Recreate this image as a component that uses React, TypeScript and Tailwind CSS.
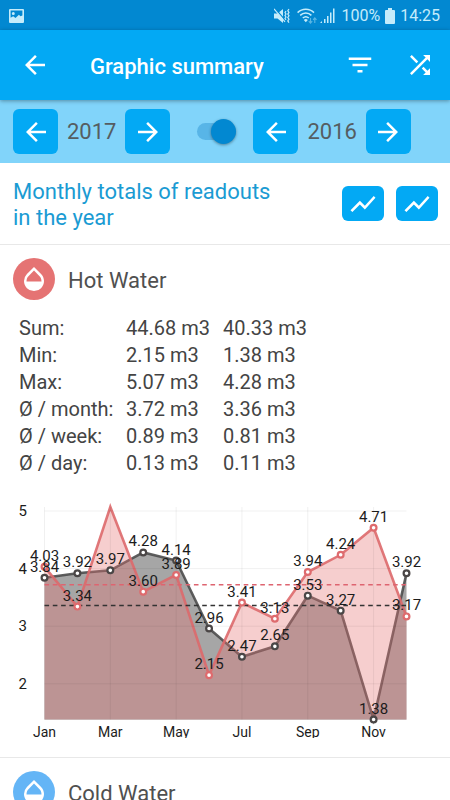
import { useState, type ReactNode } from "react";
import {
  MdArrowBack,
  MdArrowForward,
  MdFilterList,
  MdOpacity,
  MdShowChart,
  MdShuffle,
} from "react-icons/md";

const MONTHS = ["Jan", "Feb", "Mar", "Apr", "May", "Jun", "Jul", "Aug", "Sep", "Oct", "Nov", "Dec"];
const CURRENT = [4.03, 3.34, 5.07, 3.6, 3.89, 2.15, 3.41, 3.13, 3.94, 4.24, 4.71, 3.17];
const PREVIOUS = [3.84, 3.92, 3.97, 4.28, 4.14, 2.96, 2.47, 2.65, 3.53, 3.27, 1.38, 3.92];

const STATS = [
  ["Sum:", "44.68 m3", "40.33 m3"],
  ["Min:", "2.15 m3", "1.38 m3"],
  ["Max:", "5.07 m3", "4.28 m3"],
  ["Ø / month:", "3.72 m3", "3.36 m3"],
  ["Ø / week:", "0.89 m3", "0.81 m3"],
  ["Ø / day:", "0.13 m3", "0.11 m3"],
];

// Chart geometry, in view box units
const LEFT = 44.5;
const RIGHT = 406.5;
const TOP = 12;
const BOTTOM = 224.5;
const xAt = (i: number) => LEFT + (i * (RIGHT - LEFT)) / 11;
const yAt = (v: number) => 16 + (5 - v) * 57.6;
const line = (data: number[]) => data.map((v, i) => `${xAt(i)},${yAt(v)}`).join(" ");
const area = (data: number[]) => `${LEFT},${BOTTOM} ${line(data)} ${RIGHT},${BOTTOM}`;

function Series({ data, fill, stroke, opacity }: { data: number[]; fill: string; stroke: string; opacity: number }) {
  return (
    <g>
      <polygon points={area(data)} fill={fill} fillOpacity={opacity} />
      <polyline points={line(data)} fill="none" stroke={stroke} strokeWidth="2.6" strokeOpacity="0.9" />
    </g>
  );
}

function Dots({ data, color }: { data: number[]; color: string }) {
  return (
    <g fill="#fff" stroke={color} strokeWidth="2.2">
      {data.map((v, i) => (v > 5 ? null : <circle key={i} cx={xAt(i)} cy={yAt(v)} r="2.9" />))}
    </g>
  );
}

function Labels({ data }: { data: number[] }) {
  return (
    <g fill="#1c1c1c" fontSize="15" textAnchor="middle">
      {data.map((v, i) =>
        v > 5 ? null : (
          <text key={i} x={xAt(i)} y={yAt(v) - 6}>
            {v.toFixed(2)}
          </text>
        ),
      )}
    </g>
  );
}

function Chart() {
  return (
    <svg viewBox="0 0 450 243" className="mt-[18px] block w-full" role="img" aria-label="Hot Water monthly totals">
      <Series data={PREVIOUS} fill="#424242" stroke="#4c4c4c" opacity={0.47} />
      <Series data={CURRENT} fill="#e57373" stroke="#dd696c" opacity={0.35} />
      <g stroke="#000" strokeOpacity="0.06">
        {[5, 4, 3, 2].map((v) => (
          <line key={v} x1={LEFT} x2={RIGHT} y1={yAt(v)} y2={yAt(v)} />
        ))}
        {[0, 2, 4, 6, 8, 10].map((i) => (
          <line key={i} x1={xAt(i)} x2={xAt(i)} y1={TOP} y2={BOTTOM} />
        ))}
        <line x1={LEFT} x2={RIGHT} y1={BOTTOM} y2={BOTTOM} />
      </g>
      <g strokeWidth="1.6" strokeDasharray="4.6 3.7">
        <line x1={LEFT} x2={RIGHT} y1={yAt(3.72)} y2={yAt(3.72)} stroke="#de6470" />
        <line x1={LEFT} x2={RIGHT} y1={yAt(3.36)} y2={yAt(3.36)} stroke="#333" />
      </g>
      <Dots data={PREVIOUS} color="#4a4646" />
      <Dots data={CURRENT} color="#de6b6e" />
      <Labels data={PREVIOUS} />
      <Labels data={CURRENT} />
      <g fill="#1c1c1c" fontSize="15">
        {[5, 4, 3, 2].map((v) => (
          <text key={v} x="27" y={yAt(v) + 5} textAnchor="end">
            {v}
          </text>
        ))}
      </g>
      <g fill="#1c1c1c" fontSize="14" textAnchor="middle">
        {MONTHS.map((m, i) =>
          i % 2 ? null : (
            <text key={m} x={xAt(i)} y="242">
              {m}
            </text>
          ),
        )}
      </g>
    </svg>
  );
}

function StatusBar() {
  return (
    <div className="flex h-[30px] shrink-0 items-center bg-[#0288d1] pl-[9px] pr-[10px] pt-px text-[#c5ecfb]">
      <svg width="15" height="14" viewBox="0 0 15 14" fill="currentColor" aria-hidden="true">
        <path
          fillRule="evenodd"
          d="M1 0h13a1 1 0 011 1v12a1 1 0 01-1 1H1a1 1 0 01-1-1V1a1 1 0 011-1zm.6 1.600v7.200l2.600-1.600 2.300 1.700 3.400-3.100 1.600 1.400 1.900-.7V1.600zM4.300 3a1.500 1.500 0 110 3 1.500 1.500 0 010-3z"
        />
      </svg>
      <div className="ml-auto flex items-center">
        <svg width="16" height="16" viewBox="0 0 16 16" aria-hidden="true">
          <path d="M0 5.500h3.500L9 1v14l-5.500-4.500H0z" fill="currentColor" />
          <path d="M.8 0l11 13" stroke="#0288d1" strokeWidth="1.200" />
          <path d="M0 .8l11 13" stroke="currentColor" strokeWidth="1.200" />
          <path
            d="M12 3l-1 1.500 1 1.500-1 1.500 1 1.500-1 1.500 1 1.500M15 1l-1.200 1.700L15 4.400l-1.200 1.700L15 7.800l-1.200 1.700 1.200 1.700-1.200 1.700 1.200 1.700"
            fill="none"
            stroke="currentColor"
            strokeWidth="1.200"
          />
        </svg>
        <svg className="ml-[7px]" width="20" height="16" viewBox="0 0 20 16" aria-hidden="true">
          <g fill="none" stroke="currentColor" strokeWidth="1.500">
            <path d="M.6 4.600a11.500 11.500 0 0116.400 0" />
            <path d="M3.200 7.400a8 8 0 0111.200 0" />
            <path d="M5.800 10a4.500 4.500 0 016 0" />
          </g>
          <path d="M8.800 14.200L6.800 11.900a3 3 0 014 0z" fill="currentColor" />
          <path
            d="M13.500 10v5m-1.700-1.900l1.700 2 1.700-2M17.800 15v-5m-1.700 1.900l1.700-2 1.700 2"
            fill="none"
            stroke="#5bb6e3"
            strokeWidth="1.100"
          />
        </svg>
        <svg className="ml-[3px]" width="15" height="16" viewBox="0 0 15 16" fill="currentColor" aria-hidden="true">
          <path d="M0 15l2-2v2zM4 11h1.500v4H4zM7 8h1.500v7H7zM10 4.500h1.500V15H10zM13 .5h1.500V15H13z" />
        </svg>
        <span className="ml-[6px] text-base">100%</span>
        <svg className="ml-[5px]" width="10" height="16" viewBox="0 0 10 16" fill="currentColor" aria-hidden="true">
          <path d="M3 0h4v2h2a1 1 0 011 1v12a1 1 0 01-1 1H1a1 1 0 01-1-1V3a1 1 0 011-1h2z" />
        </svg>
        <span className="ml-[5px] text-base">14:25</span>
      </div>
    </div>
  );
}

type IconButtonProps = { label: string; className: string; onClick?: () => void; children: ReactNode };

function IconButton({ label, className, onClick, children }: IconButtonProps) {
  return (
    <button
      type="button"
      aria-label={label}
      onClick={onClick}
      className={`flex shrink-0 items-center justify-center text-[30px] text-white ${className}`}
    >
      {children}
    </button>
  );
}

function YearPicker({ initial }: { initial: number }) {
  const [year, setYear] = useState(initial);
  return (
    <div className="flex items-center gap-[9px]">
      <IconButton
        label="Previous year"
        className="size-[45px] rounded-md bg-[#03a9f4]"
        onClick={() => setYear(year - 1)}
      >
        <MdArrowBack />
      </IconButton>
      <span className="text-[22px] text-[#555d61]">{year}</span>
      <IconButton label="Next year" className="size-[45px] rounded-md bg-[#03a9f4]" onClick={() => setYear(year + 1)}>
        <MdArrowForward />
      </IconButton>
    </div>
  );
}

function MeterHeading({ name, color }: { name: string; color: string }) {
  return (
    <div className="flex items-center gap-[13px] px-[13px] pt-[13px]">
      <span className={`flex size-[42px] items-center justify-center rounded-full text-[30px] text-white ${color}`}>
        <MdOpacity />
      </span>
      <h3 className="pt-0.5 text-[22px] text-[#505050]">{name}</h3>
    </div>
  );
}

export default function App() {
  return (
    <div className="flex h-screen flex-col overflow-hidden bg-white font-[Roboto,sans-serif]">
      <StatusBar />
      <header className="z-10 flex h-[70px] shrink-0 items-center bg-[#03a9f4] px-[15px] shadow-[0_1px_4px_rgba(0,0,0,0.35)]">
        <IconButton label="Back" className="size-10">
          <MdArrowBack />
        </IconButton>
        <h1 className="ml-[35px] flex-1 pt-0.5 text-[22px] font-medium text-white">Graphic summary</h1>
        <IconButton label="Filter" className="size-10">
          <MdFilterList />
        </IconButton>
        <IconButton label="Shuffle" className="-mr-[5px] ml-5 size-10">
          <MdShuffle />
        </IconButton>
      </header>

      <div className="flex h-[63px] shrink-0 items-center bg-[#81d4fa] px-[13px]">
        <YearPicker initial={2017} />
        <label className="ml-[27px] mr-[17px] flex h-[25px] items-center">
          <input
            type="checkbox"
            defaultChecked
            aria-label="Compare years"
            className="flex h-[17px] w-[39px] appearance-none items-center rounded-full bg-[#58b5e7] before:size-[25px] before:shrink-0 before:rounded-full before:bg-[#0288d1] before:shadow-[0_1px_3px_rgba(0,0,0,0.4)] checked:justify-end"
          />
        </label>
        <YearPicker initial={2016} />
      </div>

      <main className="min-h-0 flex-1 overflow-y-auto [scrollbar-width:none]">
        <div className="flex h-[82px] items-center gap-3 border-b border-[#e8e8e8] pl-[13px] pr-3">
          <h2 className="flex-1 pt-0.5 text-[22px] leading-[26px] text-[#1a9bd3]">
            Monthly totals of readouts
            <br />
            in the year
          </h2>
          <IconButton label="Chart for 2017" className="h-[35px] w-[42px] rounded-md bg-[#03a9f4]">
            <MdShowChart />
          </IconButton>
          <IconButton label="Chart for 2016" className="h-[35px] w-[42px] rounded-md bg-[#03a9f4]">
            <MdShowChart />
          </IconButton>
        </div>

        <section className="border-b border-[#e8e8e8] pb-[19px]">
          <MeterHeading name="Hot Water" color="bg-[#e57373]" />
          <table className="ml-[19px] mt-[15px] text-left text-xl leading-[27px] text-[#444]">
            <tbody>
              {STATS.map(([label, current, previous]) => (
                <tr key={label}>
                  <th scope="row" className="w-[107px] p-0 font-normal">
                    {label}
                  </th>
                  <td className="w-[97px] p-0">{current}</td>
                  <td className="w-[97px] p-0">{previous}</td>
                </tr>
              ))}
            </tbody>
          </table>
          <Chart />
        </section>

        <section>
          <MeterHeading name="Cold Water" color="bg-[#64b5f6]" />
        </section>
      </main>
    </div>
  );
}
